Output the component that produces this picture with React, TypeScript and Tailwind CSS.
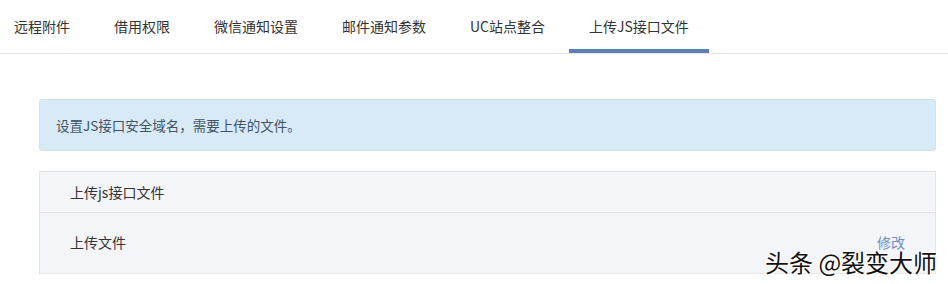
import React from 'react';

const font = { fontFamily: '"Microsoft YaHei", "Noto Sans CJK SC", sans-serif' };

const tabs = ['远程附件', '借用权限', '微信通知设置', '邮件通知参数', 'UC站点整合', '上传JS接口文件'];

export default function App() {
  const active = 5;

  return (
    <div className="relative w-[948px] h-[284px] overflow-hidden bg-white text-[#333]" style={font}>
      <div className="flex h-[54px] border-b border-[#e6e6e6] -ml-2">
        {tabs.map((t, i) => (
          <div
            key={t}
            className={`mx-[2px] px-5 flex items-center text-[14px] leading-none pt-[2px] border-b-[4px] ${
              i === active ? 'border-[#5b80b8]' : 'border-transparent'
            }`}
          >
            {t}
          </div>
        ))}
      </div>

      <div className="ml-[39px] mr-[12px] pt-[45px]">
        <div className="h-[52px] flex items-center pl-[16px] bg-[#d9eaf7] border border-[#cde2f2] rounded-[3px] text-[13.5px] text-[#3f5366]">
          设置JS接口安全域名，需要上传的文件。
        </div>

        <div className="mt-[20px] bg-[#f4f5f8] border border-[#e6e6e6]">
          <div className="h-[41px] flex items-center pl-[30px] border-b border-[#e3e3e3] text-[14px]">
            上传js接口文件
          </div>
          <div className="h-[60px] flex items-center justify-between pl-[30px] pr-[30px] pb-[2px] text-[14px] leading-none">
            <span>上传文件</span>
            <span className="text-[#6f8fc4]">修改</span>
          </div>
        </div>
      </div>

      <div
        className="absolute left-[765px] top-[250px] text-[24px] leading-none text-[#111] whitespace-nowrap"
        style={{ textShadow: '0 0 2px #fff, 0 0 2px #fff, 1px 1px 0 #fff, -1px -1px 0 #fff' }}
      >
        头条 @裂变大师
      </div>
    </div>
  );
}
